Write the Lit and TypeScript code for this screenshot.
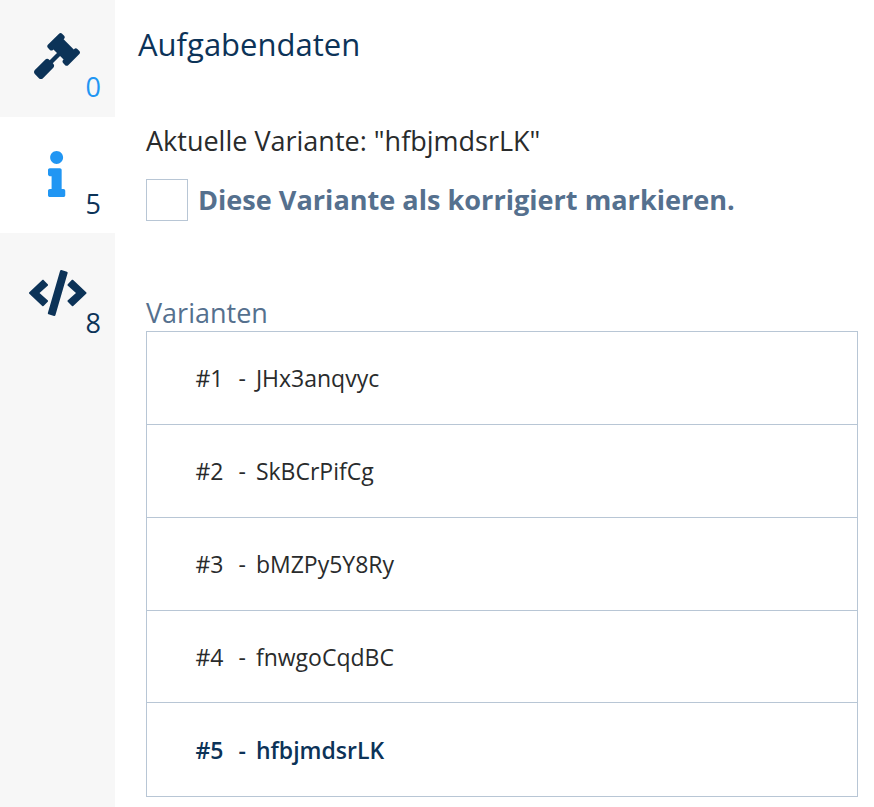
import { LitElement, html, css, svg } from "lit";
import { customElement } from "lit/decorators.js";

const GAVEL = svg`<path d="M504.971 199.362l-22.627-22.627c-9.373-9.373-24.569-9.373-33.941 0l-5.657 5.657L329.608 69.255l5.657-5.657c9.373-9.373 9.373-24.569 0-33.941L312.638 7.029c-9.373-9.373-24.569-9.373-33.941 0L154.246 131.48c-9.373 9.373-9.373 24.569 0 33.941l22.627 22.627c9.373 9.373 24.569 9.373 33.941 0l5.657-5.657 39.598 39.598-81.04 81.04-5.657-5.657c-12.497-12.497-32.758-12.497-45.255 0L9.373 412.118c-12.497 12.497-12.497 32.758 0 45.255l45.255 45.255c12.497 12.497 32.758 12.497 45.255 0l114.745-114.745c12.497-12.497 12.497-32.758 0-45.255l-5.657-5.657 81.04-81.04 39.598 39.598-5.657 5.657c-9.373 9.373-9.373 24.569 0 33.941l22.627 22.627c9.373 9.373 24.569 9.373 33.941 0l124.451-124.451c9.372-9.372 9.372-24.568 0-33.941z"/>`;
const INFO = svg`<path d="M20 424.229h20V279.771H20c-11.046 0-20-8.954-20-20V212c0-11.046 8.954-20 20-20h112c11.046 0 20 8.954 20 20v212.229h20c11.046 0 20 8.954 20 20V492c0 11.046-8.954 20-20 20H20c-11.046 0-20-8.954-20-20v-47.771c0-11.046 8.954-20 20-20zM96 0C56.235 0 24 32.235 24 72s32.235 72 72 72 72-32.235 72-72S135.764 0 96 0z"/>`;
const CODE = svg`<path d="M278.9 511.5l-61-17.7c-6.4-1.8-10-8.5-8.2-14.9L346.2 8.7c1.8-6.4 8.5-10 14.9-8.2l61 17.7c6.4 1.8 10 8.5 8.2 14.9L293.8 503.3c-1.9 6.4-8.5 10.1-14.9 8.2zm-114-112.2l43.5-46.4c4.6-4.9 4.3-12.7-.8-17.2L117 256l90.6-79.7c5.1-4.5 5.5-12.3.8-17.2l-43.5-46.4c-4.5-4.8-12.1-5.1-17-.5L3.8 247.2c-5.1 4.7-5.1 12.8 0 17.5l144.1 135.1c4.9 4.6 12.5 4.4 17-.5zm327.2.6l144.1-135.1c5.1-4.7 5.1-12.8 0-17.5L492.1 112.1c-4.8-4.5-12.4-4.3-17 .5L431.6 159c-4.6 4.9-4.3 12.7.8 17.2L523 256l-90.6 79.7c-5.1 4.5-5.5 12.3-.8 17.2l43.5 46.4c4.5 4.9 12.1 5.1 17 .6z"/>`;

const TABS = [
  { icon: GAVEL, vb: "0 0 512 512", w: 46, count: 0, cls: "count-blue" },
  { icon: INFO, vb: "0 0 192 512", w: 17.25, count: 5, cls: "active" },
  { icon: CODE, vb: "0 0 640 512", w: 57.5, count: 8, cls: "low" },
];
const VARIANTS = ["JHx3anqvyc", "SkBCrPifCg", "bMZPy5Y8Ry", "fnwgoCqdBC", "hfbjmdsrLK"];

@customElement("app-root")
export class AppRoot extends LitElement {
  static styles = css`
    :host { display: block; height: 807px; overflow: hidden; font-family: "Open Sans", sans-serif; color: #292b2c; background: #fff; }
    .layout { display: grid; grid-template-columns: 115px 1fr; height: 100%; }
    .side { background: #f7f7f7; display: flex; flex-direction: column; }
    .tab { position: relative; height: 116.6px; display: flex; justify-content: center; align-items: center; padding: 0 1px 4px 0; box-sizing: border-box; color: #0c3358; }
    .tab svg { height: 46px; display: block; fill: currentColor; }
    .tab.active { background: #fff; padding-bottom: 2px; }
    .tab.low { padding: 4px 0 0 1px; }
    .tab.active svg { fill: #2196f3; }
    .count { position: absolute; right: 14px; top: 68px; line-height: 37px; font-size: 27px; color: #0c3358; }
    .tab.low .count { top: 71px; }
    .count-blue .count { color: #2196f3; top: 67.5px; }
    .main { padding: 0 16px 0 23px; min-width: 0; }
    h1 { margin: 0; padding-top: 23px; font-weight: 400; font-size: 31px; line-height: 42px; color: #0c3358; }
    .body { padding-left: 8px; }
    .current { margin-top: 57px; font-size: 27px; line-height: 37px; }
    .check { display: flex; align-items: center; gap: 10px; margin-top: 20px; }
    .box { width: 42px; height: 42px; box-sizing: border-box; border: 1px solid #b8c6d5; background: #fff; }
    .check-label { font-size: 27.1px; font-weight: 700; color: #55708e; line-height: 37px; margin-bottom: 2px; }
    .label { margin-top: 72.7px; font-size: 27px; line-height: 37px; color: #55708e; }
    .list { border: 1px solid #b8c6d5; }
    .row { height: 92.65px; box-sizing: border-box; padding-left: 48.5px; display: flex; align-items: center; font-size: 23px; border-top: 1px solid #b8c6d5; }
    .row:first-child { border-top: 0; }
    .row:nth-child(4) { padding-top: 1px; }
    .row:last-child { height: 94px; }
    .row.sel { font-weight: 600; color: #0c3358; }
    .num { width: 43px; }
    .dash { margin-right: 10px; }
  `;

  render() {
    return html`<div class="layout">
      <nav class="side">
        ${TABS.map(t => html`<div class="tab ${t.cls}">
          <svg viewBox=${t.vb} style="width:${t.w}px">${t.icon}</svg>
          <span class="count">${t.count}</span>
        </div>`)}
      </nav>
      <main class="main">
        <h1>Aufgabendaten</h1>
        <div class="body">
          <div class="current">Aktuelle Variante: "hfbjmdsrLK"</div>
          <div class="check"><div class="box"></div><span class="check-label">Diese Variante als korrigiert markieren.</span></div>
          <div class="label">Varianten</div>
          <div class="list">
            ${VARIANTS.map((v, i) => html`<div class="row ${i === 4 ? "sel" : ""}"><span class="num">#${i + 1}</span><span class="dash">-</span><span>${v}</span></div>`)}
          </div>
        </div>
      </main>
    </div>`;
  }
}
